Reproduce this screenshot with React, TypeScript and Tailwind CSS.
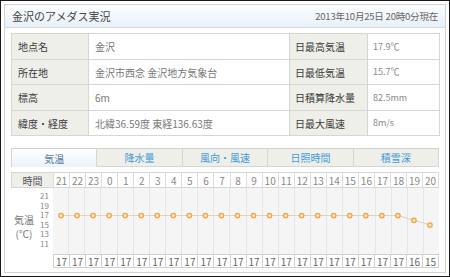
import React from 'react'

const font = { fontFamily: '"Noto Sans CJK JP", "Noto Sans", sans-serif' }

const info = [
	['地点名', '金沢', '日最高気温', '17.9℃'],
	['所在地', '金沢市西念 金沢地方気象台', '日最低気温', '15.7℃'],
	['標高', '6m', '日積算降水量', '82.5mm'],
	['緯度・経度', '北緯36.59度 東経136.63度', '日最大風速', '8m/s'],
]

const rowHeights = ['h-[26px]', 'h-[25px]', 'h-[26px]', 'h-[25px]']

const tabs = ['気温', '降水量', '風向・風速', '日照時間', '積雪深']

const hours = [21, 22, 23, 0, 1, 2, 3, 4, 5, 6, 7, 8, 9, 10, 11, 12, 13, 14, 15, 16, 17, 18, 19, 20]
const temps = [17, 17, 17, 17, 17, 17, 17, 17, 17, 17, 17, 17, 17, 17, 17, 17, 17, 17, 17, 17, 17, 17, 16, 15]

const COL = 385 / 24
const yOf = (v: number) => 27.5 - (v - 17) * 4.75

function Chart() {
	const pts = temps.map((t, i) => [COL * (i + 0.5), yOf(t)])
	return (
		<div className="relative h-[66px] flex">
			{hours.map((h, i) => (
				<div
					key={h}
					className={`flex-1 bg-[#f5f5f5] ${i > 0 ? 'border-l border-[#e6e6e6]' : ''}`}
				/>
			))}
			<svg className="absolute inset-0" width={385} height={66}>
				<polyline
					points={pts.map((p) => p.join(',')).join(' ')}
					fill="none"
					stroke="#dcd3c9"
					strokeWidth={1}
				/>
				{pts.map(([x, y], i) => (
					<circle key={i} cx={x} cy={y} r={2.2} fill="#fbe6c8" stroke="#f0a445" strokeWidth={1.3} />
				))}
			</svg>
		</div>
	)
}

export default function App() {
	return (
		<div className="w-[450px] h-[277px] border border-[#1a1a1a] bg-white p-[3px]" style={font}>
			<div className="h-[269px] border border-[#d2d2d2] flex flex-col">
				<div className="h-[23px] shrink-0 flex items-center justify-between px-[7px] border-b border-[#d5dce4] bg-gradient-to-b from-[#fdfeff] to-[#e8f0f8]">
					<span className="text-[11px] text-[#444]">金沢のアメダス実況</span>
					<span className="text-[9.5px] text-[#666] tracking-[-0.2px]">2013年10月25日 20時0分現在</span>
				</div>

				<div className="ml-[6px] w-[428px] mt-[5px]">
					<table className="w-[428px] border-collapse table-fixed">
						<colgroup>
							<col className="w-[77px]" />
							<col className="w-[201px]" />
							<col className="w-[78px]" />
							<col className="w-[72px]" />
						</colgroup>
						<tbody>
							{info.map((r, i) => (
								<tr key={r[0]} className={rowHeights[i]}>
									<td className="border border-[#d6d6d6] bg-[#efefea] pl-[6px] text-[10px] text-[#3a3a3a] p-0">{r[0]}</td>
									<td className="border border-[#d6d6d6] pl-[6px] text-[10px] text-[#777] p-0">{r[1]}</td>
									<td className="border border-[#d6d6d6] bg-[#efefea] pl-[5px] text-[10px] text-[#3a3a3a] p-0">{r[2]}</td>
									<td className="border border-[#d6d6d6] pl-[5px] text-[9px] text-[#888] p-0">{r[3]}</td>
								</tr>
							))}
						</tbody>
					</table>

					<div className="mt-[12px] h-[19px] flex border-t border-[#d0d0d0]">
						{tabs.map((t, i) => (
							<div
								key={t}
								className={`flex-1 flex items-center justify-center text-[10px] border-l border-[#d6d6d6] ${
									i === 4 ? 'border-r' : ''
								} ${
									i === 0
										? 'bg-gradient-to-b from-[#ffffff] to-[#eaf2fa] text-[#55789a]'
										: 'bg-[#efefe9] text-[#3f9ad8] border-b'
								}`}
							>
								{t}
							</div>
						))}
					</div>

					<div className="mt-[5px] grid grid-cols-[42px_1fr]">
						<div className="h-[16px] bg-[#efefea] border-y border-l border-[#d6d6d6] flex items-center justify-center text-[10px] text-[#555]">
							時間
						</div>
						<div className="h-[16px] flex border-y border-[#d6d6d6]">
							{hours.map((h) => (
								<div
									key={h}
									className="flex-1 border-l last:border-r border-[#dcdcdc] flex items-center justify-center text-[10px] text-[#888]"
								>
									{h}
								</div>
							))}
						</div>

						<div className="h-[66px] relative flex">
							<div className="w-[26px] flex flex-col items-center pt-[26px] text-[10px] text-[#777] leading-[12px]">
								<span>気温</span>
								<span className="mt-[2px]">(℃)</span>
							</div>
							<div className="flex-1 flex flex-col items-end pr-[4px] pt-[3px] text-[8px] text-[#888] leading-[9.5px]">
								{[21, 19, 17, 15, 13, 11].map((n) => (
									<span key={n}>{n}</span>
								))}
							</div>
						</div>
						<Chart />

						<div className="h-[14px]" />
						<div className="h-[14px] flex border-y border-[#d0d0d0]">
							{temps.map((t, i) => (
								<div
									key={i}
									className="flex-1 border-l last:border-r border-[#d0d0d0] bg-white flex items-center justify-center text-[10px] text-[#666]"
								>
									{t}
								</div>
							))}
						</div>
					</div>
				</div>
			</div>
		</div>
	)
}
